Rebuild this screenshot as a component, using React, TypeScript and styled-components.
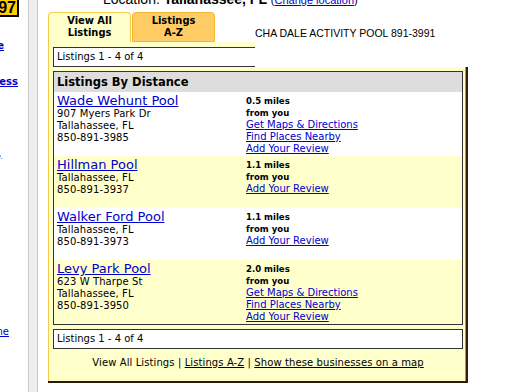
import React from "react";
import styled, { createGlobalStyle } from "styled-components";

const GlobalStyle = createGlobalStyle`
  html, body { margin: 0; padding: 0; background: #ffffff; }
  body { font-family: "DejaVu Sans", Verdana, sans-serif; overflow: hidden; }
`;

const Page = styled.div`
  display: flex;
  width: 515px;
  height: 392px;
  overflow: hidden;
  background: #fff;
`;

const LeftCol = styled.div`
  width: 28px;
  flex: none;
  overflow: hidden;
  display: flex;
  flex-direction: column;
  align-items: flex-end;
`;

const Badge = styled.div`
  margin-top: -2px;
  margin-right: 9px;
  border: 2px solid #000;
  background: #ffcc00;
  font: bold 16px "Liberation Sans", Arial, sans-serif;
  line-height: 15px;
  padding: 0 1px 0 2px;
  white-space: nowrap;
`;

const SideLink = styled.a<{ $mt: number; $mr: number; $bold?: boolean }>`
  display: block;
  margin-top: ${(p) => p.$mt}px;
  margin-right: ${(p) => p.$mr}px;
  font-size: 10px;
  line-height: 12px;
  font-weight: ${(p) => (p.$bold ? "bold" : "normal")};
  color: #0000cc;
  text-decoration: underline;
  white-space: nowrap;
`;

const Divider = styled.div`
  width: 8px;
  flex: none;
  background: #eeeeee;
  border-left: 1px solid #c8c8c8;
  border-right: 1px solid #c8c8c8;
  margin-right: 10px;
`;

const Main = styled.div`
  width: 420px;
  flex: none;
  display: flex;
  flex-direction: column;
`;

const LocationLine = styled.div`
  margin-top: -9px;
  padding-left: 55px;
  height: 16px;
  font: 14px "Liberation Sans", Arial, sans-serif;
  line-height: 16px;
  white-space: nowrap;
  color: #000;
`;

const SmallLink = styled.span`
  font-size: 11px;
  a { color: #0000cc; text-decoration: underline; }
`;

const TopRow = styled.div`
  display: flex;
  margin-top: 5px;
  height: 55px;
`;

const TabCell = styled.div`
  width: 207px;
  flex: none;
  display: flex;
  flex-direction: column;
  overflow: hidden;
`;

const Tabs = styled.div`
  display: flex;
  gap: 1px;
  height: 30px;
  align-items: flex-start;
`;

const Tab = styled.div<{ $active?: boolean }>`
  box-sizing: border-box;
  width: 83px;
  height: 30px;
  background: ${(p) => (p.$active ? "#ffffcc" : "#ffcc66")};
  border: 1px solid ${(p) => (p.$active ? "#f7c948" : "#f2b632")};
  border-bottom: ${(p) => (p.$active ? "none" : "1px solid #f2b632")};
  border-radius: 4px 4px 0 0;
  padding-top: 2px;
  text-align: center;
  font-family: "DejaVu Sans Condensed", "DejaVu Sans", sans-serif;
  font-weight: bold;
  font-size: 11px;
  line-height: 12px;
  color: #000;
`;

const Band = styled.div`
  flex: 1;
  background: #ffffcc;
  border-left: 1px solid #f7c948;
  padding: 5px 0 0 4px;
`;

const CountBox = styled.div<{ $clipped?: boolean }>`
  box-sizing: border-box;
  height: 20px;
  background: #fff;
  border: 1px solid #333;
  border-right: ${(p) => (p.$clipped ? "none" : "1px solid #333")};
  padding-left: 3px;
  font-size: 10px;
  line-height: 18px;
  white-space: nowrap;
  color: #000;
`;

const NoteCell = styled.div`
  padding-top: 14.5px;
  font: 10.5px "Liberation Sans", Arial, sans-serif;
  line-height: 12px;
  white-space: nowrap;
  color: #000;
`;

const PanelFrame = styled.div`
  border-right: 2px solid #3a1c08;
  border-bottom: 2px solid #2a1a0c;
`;

const Panel = styled.div`
  background: #ffffcc;
  border-left: 1px solid #f7c948;
  border-right: 1px solid #d9862c;
  padding: 4px 2px 12px 4px;
  display: flex;
  flex-direction: column;
`;

const Table = styled.div`
  border: 1px solid #333;
  background: #fff;
  margin-bottom: 4px;
`;

const TableHead = styled.div`
  height: 20px;
  background: #dddddd;
  padding-left: 3px;
  font-weight: bold;
  font-size: 11.5px;
  line-height: 20px;
  color: #000;
`;

const Row = styled.div<{ $alt?: boolean }>`
  display: grid;
  grid-template-columns: 189px 1fr;
  background: ${(p) => (p.$alt ? "#ffffcc" : "#ffffff")};
`;

const InfoCell = styled.div`
  padding: 2px 3px 12px 3px;
`;

const NameLink = styled.a`
  display: block;
  width: max-content;
  font-size: 13px;
  line-height: 14px;
  color: #0000cc;
  text-decoration: underline;
  white-space: nowrap;
`;

const Line = styled.div`
  font-size: 10px;
  line-height: 12px;
  letter-spacing: 0.1px;
  color: #000;
  white-space: nowrap;
`;

const ActionCell = styled.div`
  padding: 3px 0 0 3px;
`;

const Distance = styled.div`
  font-family: "DejaVu Sans Condensed", "DejaVu Sans", sans-serif;
  font-weight: bold;
  font-size: 9.5px;
  line-height: 12px;
  color: #000;
  white-space: nowrap;
`;

const ActionLink = styled.a`
  display: block;
  width: max-content;
  font-size: 10px;
  line-height: 12px;
  color: #0000cc;
  text-decoration: underline;
  white-space: nowrap;
`;

const Footer = styled.div`
  margin-top: 8px;
  text-align: center;
  font-size: 10px;
  line-height: 12px;
  letter-spacing: 0.1px;
  color: #000;
  white-space: nowrap;
`;

const FooterLink = styled.a`
  color: #000;
  text-decoration: underline;
`;

type Listing = {
  name: string;
  address?: string;
  phone: string;
  miles: string;
  full: boolean;
};

const listings: Listing[] = [
  { name: "Wade Wehunt Pool", address: "907 Myers Park Dr", phone: "850-891-3985", miles: "0.5", full: true },
  { name: "Hillman Pool", phone: "850-891-3937", miles: "1.1", full: false },
  { name: "Walker Ford Pool", phone: "850-891-3973", miles: "1.1", full: false },
  { name: "Levy Park Pool", address: "623 W Tharpe St", phone: "850-891-3950", miles: "2.0", full: true },
];

export default function App() {
  return (
    <Page>
      <GlobalStyle />
      <LeftCol>
        <Badge>1997</Badge>
        <SideLink $mt={22.5} $mr={24} $bold>Home</SideLink>
        <SideLink $mt={24} $mr={10} $bold>Add a Business</SideLink>
        <SideLink $mt={60} $mr={26.5}>Help,</SideLink>
        <SideLink $mt={166.5} $mr={19}>Phone</SideLink>
      </LeftCol>
      <Divider />
      <Main>
        <LocationLine>
          Location: <b>Tallahassee, FL</b>{" "}
          <SmallLink>
            (<a>Change location</a>)
          </SmallLink>
        </LocationLine>
        <TopRow>
          <TabCell>
            <Tabs>
              <Tab $active>
                View All
                <br />
                Listings
              </Tab>
              <Tab>
                Listings
                <br />
                A-Z
              </Tab>
            </Tabs>
            <Band>
              <CountBox $clipped>Listings 1 - 4 of 4</CountBox>
            </Band>
          </TabCell>
          <NoteCell>CHA DALE ACTIVITY POOL 891-3991</NoteCell>
        </TopRow>
        <PanelFrame>
          <Panel>
            <Table>
              <TableHead>Listings By Distance</TableHead>
              {listings.map((l, i) => (
                <Row key={l.name} $alt={i % 2 === 1}>
                  <InfoCell>
                    <NameLink>{l.name}</NameLink>
                    {l.address && <Line>{l.address}</Line>}
                    <Line>Tallahassee, FL</Line>
                    <Line>{l.phone}</Line>
                  </InfoCell>
                  <ActionCell>
                    <Distance>{l.miles} miles</Distance>
                    <Distance>from you</Distance>
                    {l.full && <ActionLink>Get Maps &amp; Directions</ActionLink>}
                    {l.full && <ActionLink>Find Places Nearby</ActionLink>}
                    <ActionLink>Add Your Review</ActionLink>
                  </ActionCell>
                </Row>
              ))}
            </Table>
            <CountBox>Listings 1 - 4 of 4</CountBox>
            <Footer>
              View All Listings | <FooterLink>Listings A-Z</FooterLink> |{" "}
              <FooterLink>Show these businesses on a map</FooterLink>
            </Footer>
          </Panel>
        </PanelFrame>
      </Main>
    </Page>
  );
}
